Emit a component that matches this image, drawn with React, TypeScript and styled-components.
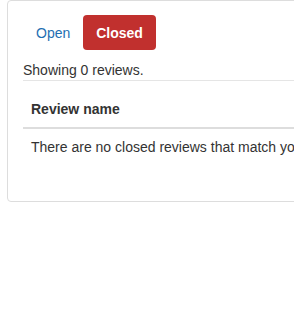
import { createGlobalStyle } from 'styled-components'
import styled from 'styled-components'

const GlobalStyle = createGlobalStyle`
  body {
    margin: 0;
    background: #fff;
    font-family: 'Liberation Sans', Arial, sans-serif;
    font-size: 14px;
    line-height: 20px;
    color: #333;
  }
`

const Panel = styled.div`
  margin-left: 7px;
  width: 420px;
  border: 1px solid #ddd;
  border-radius: 4px;
  padding: 14px 15px 36px 15px;
  box-sizing: border-box;
`

const Tabs = styled.ul`
  display: flex;
  list-style: none;
  margin: 0;
  padding: 0;
`

const Tab = styled.li<{ $active?: boolean }>`
  padding: 8px 13px 7px;
  line-height: 20px;
  border-radius: 4px;
  font-weight: ${(p) => (p.$active ? 'bold' : 'normal')};
  color: ${(p) => (p.$active ? '#fff' : '#1f6fb2')};
  background: ${(p) => (p.$active ? '#c1302e' : 'transparent')};
  cursor: pointer;
`

const Summary = styled.div`
  margin-top: 10px;
  border-bottom: 1px solid #e5e5e5;
`

const Table = styled.table`
  width: 100%;
  border-collapse: collapse;
  margin-top: 10px;
  th,
  td {
    text-align: left;
    padding: 8px;
    line-height: 20px;
  }
  th {
    font-weight: bold;
    border-bottom: 2px solid #ddd;
  }
`

export default function App() {
  return (
    <>
      <GlobalStyle />
      <Panel>
        <Tabs>
          <Tab>Open</Tab>
          <Tab $active>Closed</Tab>
        </Tabs>
        <Summary>Showing 0 reviews.</Summary>
        <Table>
          <thead>
            <tr>
              <th>Review name</th>
            </tr>
          </thead>
          <tbody>
            <tr>
              <td>There are no closed reviews that match your search.</td>
            </tr>
          </tbody>
        </Table>
      </Panel>
    </>
  )
}
